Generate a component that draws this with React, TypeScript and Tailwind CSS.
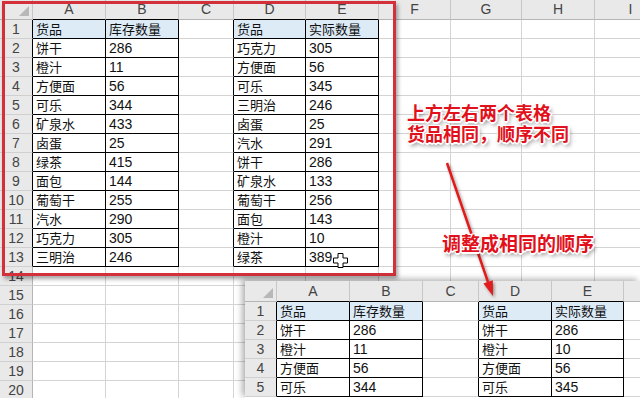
import React from "react";

type Table = { col: number; rows: string[][] };

const left: string[][] = [
  ["货品", "库存数量"],
  ["饼干", "286"],
  ["橙汁", "11"],
  ["方便面", "56"],
  ["可乐", "344"],
  ["矿泉水", "433"],
  ["卤蛋", "25"],
  ["绿茶", "415"],
  ["面包", "144"],
  ["葡萄干", "255"],
  ["汽水", "290"],
  ["巧克力", "305"],
  ["三明治", "246"],
];

const right: string[][] = [
  ["货品", "实际数量"],
  ["巧克力", "305"],
  ["方便面", "56"],
  ["可乐", "345"],
  ["三明治", "246"],
  ["卤蛋", "25"],
  ["汽水", "291"],
  ["饼干", "286"],
  ["矿泉水", "133"],
  ["葡萄干", "256"],
  ["面包", "143"],
  ["橙汁", "10"],
  ["绿茶", "389"],
];

const sorted: string[][] = [
  ["货品", "实际数量"],
  ["饼干", "286"],
  ["橙汁", "10"],
  ["方便面", "56"],
  ["可乐", "345"],
];

function findCell(tables: Table[], ci: number, rn: number) {
  for (const t of tables) {
    const c = ci - t.col;
    const r = rn - 1;
    if (c >= 0 && c < 2 && r >= 0 && r < t.rows.length) {
      return { text: t.rows[r][c], head: r === 0 };
    }
  }
  return null;
}

function Corner() {
  return (
    <div className="relative bg-[#e9e9e9] border-r border-b border-r-[#c6c6c6] border-b-[#b5b5b5]">
      <svg className="absolute right-[3px] bottom-[3px]" width="10" height="10" viewBox="0 0 10 10">
        <polygon points="10,0 10,10 0,10" fill="#b8b8b8" />
      </svg>
    </div>
  );
}

function Sheet({
  cols,
  letters,
  rows,
  headH,
  tables,
}: {
  cols: string;
  letters: string[];
  rows: number;
  headH: string;
  tables: Table[];
}) {
  const rowNums = Array.from({ length: rows }, (_, i) => i + 1);
  return (
    <div className={`grid ${cols} font-['Liberation_Sans',sans-serif]`}>
      <Corner />
      {letters.map((l, ci) => (
        <div
          key={l}
          className={`${headH} flex items-center justify-center bg-[#e9e9e9] text-[14px] text-[#444] border-r border-b border-r-[#c6c6c6] ${
            findCell(tables, ci, 1) ? "border-b-black" : "border-b-[#b5b5b5]"
          }`}
        >
          {l}
        </div>
      ))}
      {rowNums.map((rn) => (
        <React.Fragment key={rn}>
          <div
            className={`h-[19px] flex items-center justify-center bg-[#e9e9e9] text-[14px] text-[#444] border-r border-b border-b-[#d0d0d0] ${
              findCell(tables, 0, rn) ? "border-r-black" : "border-r-[#b5b5b5]"
            }`}
          >
            {rn}
          </div>
          {letters.map((l, ci) => {
            const cell = findCell(tables, ci, rn);
            const rBlack = cell || findCell(tables, ci + 1, rn);
            const bBlack = cell || findCell(tables, ci, rn + 1);
            const isNum = cell && /^\d+$/.test(cell.text);
            return (
              <div
                key={l}
                className={`h-[19px] flex items-center px-[3px] whitespace-nowrap overflow-hidden text-[#111] border-r border-b ${
                  rBlack ? "border-r-black" : "border-r-[#d4d4d4]"
                } ${bBlack ? "border-b-black" : "border-b-[#d4d4d4]"} ${
                  cell?.head ? "bg-[#ddebf7]" : ""
                } ${
                  isNum
                    ? "text-[14px] font-['Liberation_Sans',sans-serif]"
                    : "text-[13px] font-['Noto_Sans_CJK_SC',sans-serif]"
                }`}
              >
                {cell?.text}
              </div>
            );
          })}
        </React.Fragment>
      ))}
    </div>
  );
}

const note =
  "text-[#e2101b] font-['Noto_Sans_CJK_SC',sans-serif] font-semibold whitespace-nowrap [text-shadow:1px_1px_0_#fff,-1px_-1px_0_#fff,1px_-1px_0_#fff,-1px_1px_0_#fff,0_2px_0_#fff,2px_0_0_#fff,2px_3px_4px_rgba(0,0,0,0.55)]";

export default function App() {
  return (
    <div className="relative w-[640px] h-[398px] overflow-hidden bg-white">
      <Sheet
        cols="grid-cols-[33px_73px_73px_55px_72px_73px_72px_71px_73px_72px]"
        letters={["A", "B", "C", "D", "E", "F", "G", "H", "I"]}
        rows={20}
        headH="h-[20px]"
        tables={[
          { col: 0, rows: left },
          { col: 3, rows: right },
        ]}
      />

      {/* red frame round the two tables */}
      <div className="absolute left-[2px] top-[1px] w-[394px] h-[275px] border-[3px] border-[#d3303a] shadow-[2px_3px_4px_rgba(0,0,0,0.35)]" />

      {/* fill cursor on E13 */}
      <svg className="absolute left-[333px] top-[253px]" width="15" height="15" viewBox="0 0 15 15">
        <polygon
          points="5,0.5 10,0.5 10,5 14.5,5 14.5,10 10,10 10,14.5 5,14.5 5,10 0.5,10 0.5,5 5,5"
          fill="#fff"
          stroke="#000"
          strokeWidth="1"
        />
      </svg>

      {/* pasted result sheet */}
      <div className="absolute left-[245px] top-[281px] w-[395px] h-[117px] overflow-hidden bg-white shadow-[-3px_-2px_6px_rgba(0,0,0,0.3)]">
        <Sheet
          cols="grid-cols-[32px_73px_73px_56px_73px_72px_72px]"
          letters={["A", "B", "C", "D", "E", "F"]}
          rows={5}
          headH="h-[21px]"
          tables={[
            { col: 0, rows: left.slice(0, 5) },
            { col: 3, rows: sorted },
          ]}
        />
      </div>

      {/* arrow */}
      <svg className="absolute left-0 top-0" width="640" height="398" viewBox="0 0 640 398">
        <defs>
          <filter id="sh" x="-20%" y="-20%" width="140%" height="140%">
            <feDropShadow dx="1.5" dy="2" stdDeviation="1.5" floodColor="#000" floodOpacity="0.4" />
          </filter>
        </defs>
        <g filter="url(#sh)">
          <line x1="447" y1="163" x2="488" y2="282" stroke="#e01a1a" strokeWidth="2.5" />
          <polygon points="493,296 483.4,283.4 492.8,280.2" fill="#e01a1a" />
        </g>
      </svg>

      <div className="absolute left-[407px] top-[102px] flex flex-col text-[18px] leading-[21px]">
        <div className={note}>上方左右两个表格</div>
        <div className={note}>货品相同，顺序不同</div>
      </div>
      <div className={`absolute left-[442px] top-[232px] text-[19px] leading-[22px] ${note}`}>
        调整成相同的顺序
      </div>
    </div>
  );
}
